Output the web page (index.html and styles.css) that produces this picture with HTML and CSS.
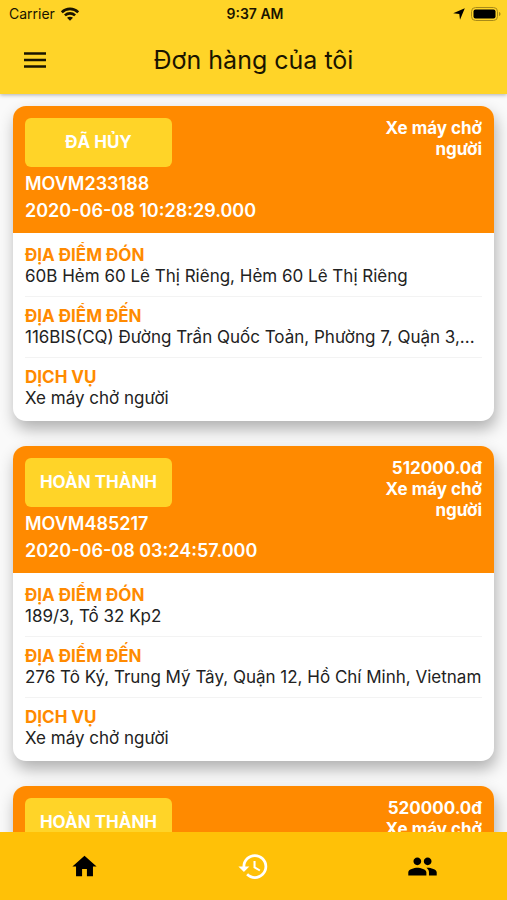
FILE: index.html
```
<!DOCTYPE html>
<html lang="vi">

<head>
    <meta charset="UTF-8">
    <meta name="viewport" content="width=device-width, initial-scale=1.0">
    <title>Đơn hàng của tôi</title>
    <link rel="stylesheet" href="styles.css">
</head>

<body>
    <div class="app">
        <header class="top">
            <div class="status-bar">
                <div class="status-left">
                    <span>Carrier</span>
                    <svg width="18" height="14" viewBox="0 0 18 14" fill="none" stroke="#1a1400" stroke-width="2.6">
                        <path d="M.8 5.200C5.300.8 12.700.8 17.200 5.200" />
                        <path d="M3.900 8.400c2.900-2.700 7.300-2.700 10.200 0" />
                        <path d="M9 13.800l3-3c-1.700-1.500-4.300-1.500-6 0z" fill="#1a1400" stroke="none" />
                    </svg>
                </div>
                <span class="clock">9:37 AM</span>
                <div class="status-right">
                    <svg width="12" height="12" viewBox="0 0 12 12">
                        <path d="M11.800.300L7 11.800 6.300 5.900.200 5.200z" fill="#000" />
                    </svg>
                    <svg width="30" height="14" viewBox="0 0 30 14">
                        <rect x=".5" y=".5" width="26" height="13" rx="4" fill="none" stroke="#a88a18" />
                        <rect x="2.500" y="2.500" width="22" height="9" rx="2" fill="#000" />
                        <path d="M28 5c2 .6 2 3.400 0 4z" fill="#a88a18" />
                    </svg>
                </div>
            </div>
            <div class="app-bar">
                <button class="menu-btn" aria-label="Menu">
                    <svg width="24" height="18" viewBox="0 0 24 18">
                        <path d="M1 2.500h22M1 9h22M1 15.500h22" stroke="#1a1400" stroke-width="2.500" />
                    </svg>
                </button>
                <h1>Đơn hàng của tôi</h1>
            </div>
        </header>

        <main class="orders">
            <article class="card">
                <div class="card-head">
                    <div class="card-info">
                        <button class="state">ĐÃ HỦY</button>
                        <p>MOVM233188</p>
                        <p>2020-06-08 10:28:29.000</p>
                    </div>
                    <div class="card-price">
                        <p>Xe máy chở người</p>
                    </div>
                </div>
                <dl class="card-body">
                    <div class="row">
                        <dt>ĐỊA ĐIỂM ĐÓN</dt>
                        <dd>60B Hẻm 60 Lê Thị Riêng, Hẻm 60 Lê Thị Riêng</dd>
                    </div>
                    <div class="row">
                        <dt>ĐỊA ĐIỂM ĐẾN</dt>
                        <dd>116BIS(CQ) Đường Trần Quốc Toản, Phường 7, Quận 3,...</dd>
                    </div>
                    <div class="row">
                        <dt>DỊCH VỤ</dt>
                        <dd>Xe máy chở người</dd>
                    </div>
                </dl>
            </article>

            <article class="card">
                <div class="card-head">
                    <div class="card-info">
                        <button class="state">HOÀN THÀNH</button>
                        <p>MOVM485217</p>
                        <p>2020-06-08 03:24:57.000</p>
                    </div>
                    <div class="card-price">
                        <p>512000.0đ</p>
                        <p>Xe máy chở người</p>
                    </div>
                </div>
                <dl class="card-body">
                    <div class="row">
                        <dt>ĐỊA ĐIỂM ĐÓN</dt>
                        <dd>189/3, Tổ 32 Kp2</dd>
                    </div>
                    <div class="row">
                        <dt>ĐỊA ĐIỂM ĐẾN</dt>
                        <dd>276 Tô Ký, Trung Mỹ Tây, Quận 12, Hồ Chí Minh, Vietnam</dd>
                    </div>
                    <div class="row">
                        <dt>DỊCH VỤ</dt>
                        <dd>Xe máy chở người</dd>
                    </div>
                </dl>
            </article>

            <article class="card">
                <div class="card-head">
                    <div class="card-info">
                        <button class="state">HOÀN THÀNH</button>
                    </div>
                    <div class="card-price">
                        <p>520000.0đ</p>
                        <p>Xe máy chở</p>
                    </div>
                </div>
            </article>
        </main>

        <nav class="tabs">
            <a href="#home" aria-label="Trang chủ">
                <svg width="29" height="29" viewBox="0 0 24 24">
                    <path d="M10 20v-6h4v6h5v-8h3L12 3 2 12h3v8z" />
                </svg>
            </a>
            <a href="#orders" class="active" aria-label="Đơn hàng">
                <svg width="33" height="33" viewBox="0 0 24 24">
                    <path d="M13 3a9 9 0 0 0-9 9H1l3.900 3.900.07.140L9 12H6c0-3.870 3.130-7 7-7s7 3.130 7 7-3.130 7-7 7c-1.930 0-3.680-.790-4.940-2.060l-1.420 1.420A8.950 8.950 0 0 0 13 21a9 9 0 0 0 0-18zm-1 5v5l4.280 2.540.720-1.210-3.500-2.080V8z" />
                </svg>
            </a>
            <a href="#friends" aria-label="Bạn bè">
                <svg width="31" height="31" viewBox="0 0 24 24">
                    <path d="M16 11c1.660 0 2.990-1.340 2.990-3S17.660 5 16 5s-3 1.340-3 3 1.340 3 3 3zm-8 0c1.660 0 2.990-1.340 2.990-3S9.660 5 8 5 5 6.340 5 8s1.340 3 3 3zm0 2c-2.330 0-7 1.170-7 3.500V19h14v-2.500C15 14.170 10.330 13 8 13zm8 0c-.290 0-.620.020-.970.050 1.160.840 1.970 1.970 1.970 3.450V19h6v-2.500c0-2.330-4.670-3.500-7-3.500z" />
                </svg>
            </a>
        </nav>
    </div>
</body>

</html>
```
FILE: styles.css
```
* {
    margin: 0;
    padding: 0;
    box-sizing: border-box;
}

body {
    font-family: Inter, "Noto Sans", sans-serif;
    font-size: 17px;
    line-height: 21px;
    color: #222;
    background-color: #fafafa;
}

button {
    border: none;
    background: none;
    font: inherit;
    cursor: pointer;
}

.app {
    height: 100vh;
    display: flex;
    flex-direction: column;
}

/* header */
.top {
    background-color: #ffd428;
    color: #1a1400;
    box-shadow: 0 1px 4px rgba(0, 0, 0, .3);
    z-index: 1;
}

.status-bar {
    display: grid;
    grid-template-columns: 1fr auto 1fr;
    align-items: center;
    height: 27px;
    padding: 0 6px 0 9px;
    font-size: 14px;
}

.status-left,
.status-right {
    display: flex;
    align-items: center;
    gap: 6px;
}

.status-right {
    justify-content: flex-end;
}

.clock {
    font-weight: 600;
}

.app-bar {
    display: grid;
    grid-template-columns: 70px 1fr 70px;
    align-items: center;
    height: 67px;
    padding-bottom: 2px;
}

.menu-btn {
    display: flex;
    justify-content: center;
    align-items: center;
    height: 48px;
}

.app-bar h1 {
    font-size: 25px;
    line-height: 32px;
    font-weight: 400;
    text-align: center;
}

/* order list */
.orders {
    flex: 1;
    min-height: 0;
    overflow-y: auto;
    scrollbar-width: none;
    padding: 12px 13px;
}

.card {
    margin-bottom: 25px;
    border-radius: 13px;
    background-color: #fff;
    overflow: hidden;
    box-shadow: 2px 8px 16px rgba(0, 0, 0, .3);
}

.card-head {
    display: flex;
    justify-content: space-between;
    min-height: 127px;
    padding: 12px 12px 9px;
    background-color: #ff8a00;
    color: #fff;
    font-weight: 700;
}

.card-info p {
    font-size: 18px;
    line-height: 27px;
    font-weight: 600;
}

.state {
    display: block;
    width: 147px;
    height: 49px;
    margin-bottom: 3px;
    border-radius: 6px;
    background-color: #ffd428;
    color: #fff;
}

.card-price {
    width: 120px;
    text-align: right;
}

.card-body {
    padding: 3px 12px 2px;
}

.row {
    padding: 9px 0;
    border-bottom: 1px solid #f3f3f3;
}

.row:last-child {
    border-color: transparent;
}

.row dt {
    color: #ff8a00;
    font-weight: 700;
}

.row dd {
    white-space: nowrap;
    overflow: hidden;
    text-overflow: ellipsis;
}

/* bottom navigation */
.tabs {
    display: flex;
    height: 68px;
    background-color: #ffc107;
    z-index: 1;
}

.tabs a {
    flex: 1;
    display: flex;
    justify-content: center;
    align-items: center;
    color: #000;
}

.tabs .active {
    color: #fff;
}

.tabs svg {
    fill: currentColor;
}
```
